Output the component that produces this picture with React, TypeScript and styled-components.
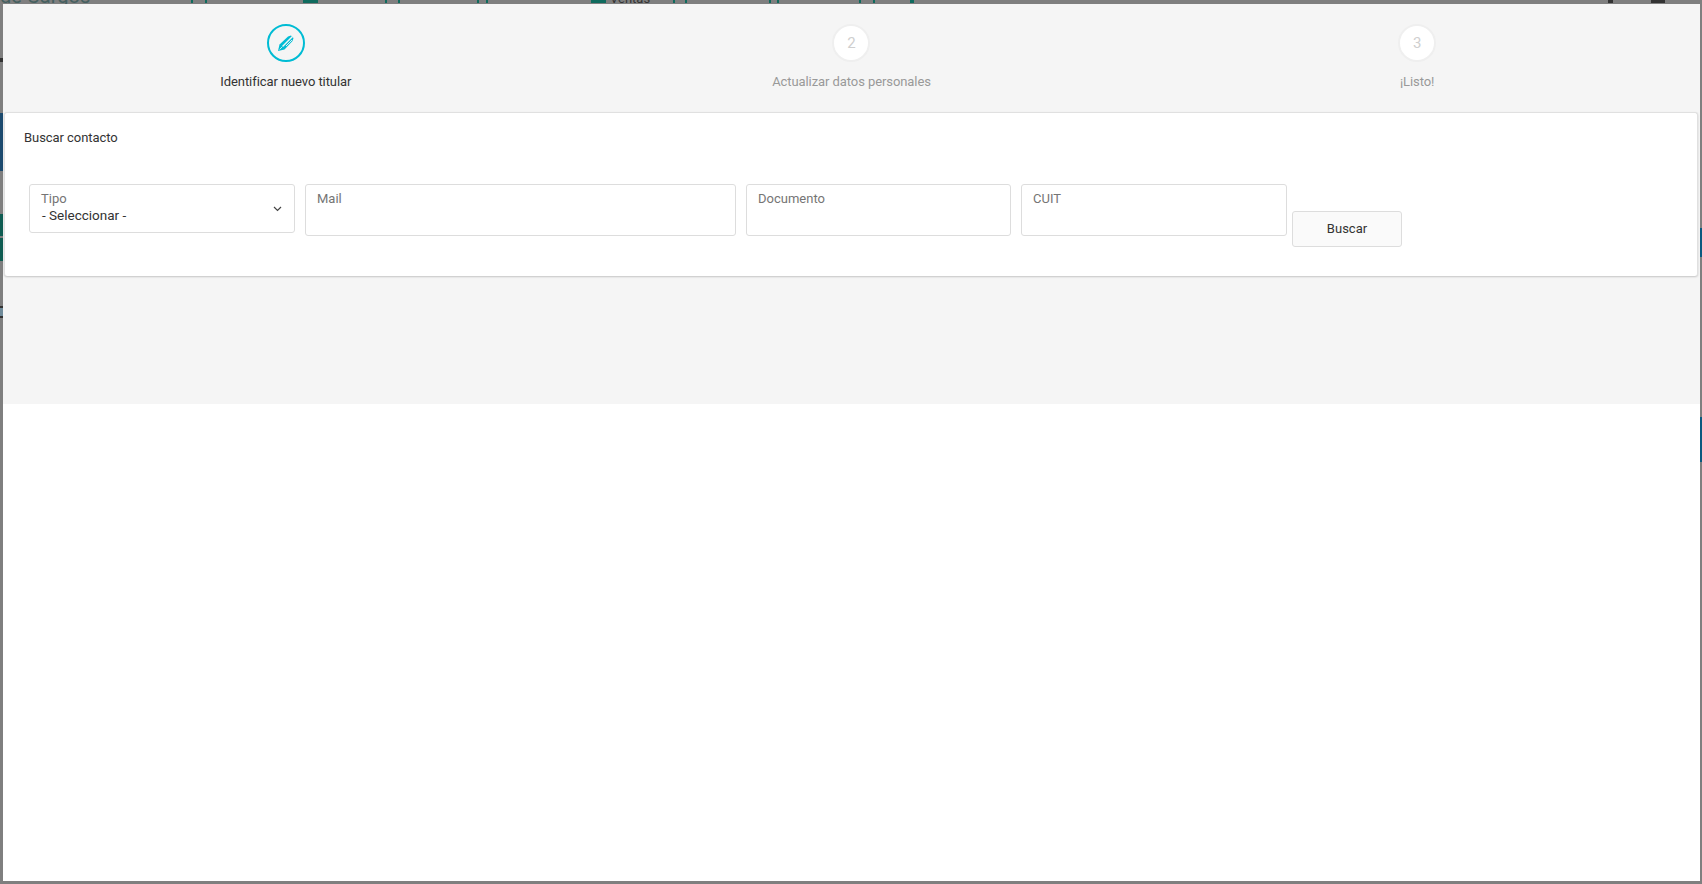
import React, { FC } from 'react';
import styled, { createGlobalStyle } from 'styled-components';

const GlobalStyle = createGlobalStyle`
  html, body {
    margin: 0;
    padding: 0;
    height: 100%;
    overflow: hidden;
    background: #7f7f7f;
    font-family: Roboto, "Liberation Sans", sans-serif;
  }
  * {
    box-sizing: border-box;
  }
`;

const Backdrop = styled.div`
  width: 1702px;
  height: 884px;
  background: #7f7f7f;
  display: flex;
  flex-direction: column;
  overflow: hidden;
`;

const TopSliver = styled.div`
  height: 4px;
  flex: none;
  display: flex;
  overflow: hidden;
`;

const SliverTitle = styled.span`
  width: 191px;
  flex: none;
  margin-top: -16px;
  font-size: 20px;
  line-height: 24px;
  color: #45605f;
  white-space: nowrap;
`;

const SliverText = styled.span`
  width: 36px;
  flex: none;
  margin-top: -9px;
  padding-left: 4px;
  font-size: 13px;
  line-height: 16px;
  color: #333;
`;

const SliverMark = styled.i<{ $left: number; $width: number; $solid?: boolean; $color?: string }>`
  flex: none;
  display: block;
  margin-left: ${p => p.$left}px;
  width: ${p => p.$width}px;
  height: 3px;
  background: ${p => (p.$solid ? p.$color || '#0f6b5e' : 'transparent')};
  border-left: 2px solid ${p => p.$color || '#0f6b5e'};
  border-right: 2px solid ${p => p.$color || '#0f6b5e'};
`;

const Middle = styled.div`
  flex: 1;
  min-height: 0;
  display: flex;
`;

const EdgeStrip = styled.div<{ $width: number }>`
  width: ${p => p.$width}px;
  flex: none;
  display: flex;
  flex-direction: column;
`;

const EdgeBand = styled.i<{ $height: number; $color?: string }>`
  display: block;
  height: ${p => p.$height}px;
  background: ${p => p.$color || 'transparent'};
`;

const Modal = styled.div`
  flex: 1;
  min-width: 0;
  background: #fff;
`;

const Tray = styled.div`
  height: 400px;
  background: #f5f5f5;
  padding: 0 2px 0 1px;
`;

const Steps = styled.div`
  height: 108px;
  margin: 0 -2px 0 -1px;
  display: grid;
  grid-template-columns: repeat(3, 1fr);
`;

const Step = styled.div`
  display: flex;
  flex-direction: column;
  align-items: center;
  padding-top: 20px;
`;

const Bubble = styled.div<{ $active?: boolean }>`
  width: 38px;
  height: 38px;
  border-radius: 50%;
  display: flex;
  align-items: center;
  justify-content: center;
  background: ${p => (p.$active ? '#f5f5f5' : '#fff')};
  border: 2px solid ${p => (p.$active ? '#00bcd4' : '#efefef')};
  color: #cfcfcf;
  font-size: 15px;
  padding-bottom: 1px;
`;

const StepLabel = styled.div<{ $active?: boolean }>`
  margin-top: 10px;
  font-size: 13px;
  line-height: 20px;
  letter-spacing: -0.08px;
  color: ${p => (p.$active ? '#333' : '#999')};
`;

const Card = styled.div`
  height: 164px;
  background: #fff;
  border: 1px solid #e0e0e0;
  border-bottom: 0;
  border-radius: 3px;
  box-shadow: 0 1px 2px rgba(0, 0, 0, 0.2);
  padding: 17px 20px 0 19px;
`;

const CardTitle = styled.div`
  font-size: 13px;
  line-height: 16px;
  letter-spacing: -0.06px;
  color: #333;
`;

const SearchRow = styled.div`
  margin-top: 38px;
  padding-left: 5px;
  display: flex;
  align-items: flex-start;
`;

const Field = styled.div<{ $width: number; $height: number; $gap?: number }>`
  position: relative;
  flex: none;
  width: ${p => p.$width}px;
  height: ${p => p.$height}px;
  margin-right: ${p => (p.$gap === undefined ? 10 : p.$gap)}px;
  padding: 6px 11px 0;
  background: #fff;
  border: 1px solid #ddd;
  border-radius: 3px;
`;

const FieldLabel = styled.div`
  font-size: 13px;
  line-height: 16px;
  color: #757575;
`;

const FieldValue = styled.div`
  padding-left: 1px;
  font-size: 13.5px;
  line-height: 17px;
  color: #333;
`;

const Caret = styled.svg`
  position: absolute;
  right: 12px;
  top: 21px;
  width: 9px;
  height: 6px;
`;

const SearchButton = styled.button`
  flex: none;
  width: 110px;
  height: 36px;
  margin-top: 27px;
  padding: 0 0 2px;
  background: #fafafa;
  border: 1px solid #ddd;
  border-radius: 3px;
  font-family: inherit;
  font-size: 13px;
  color: #333;
`;

const PenIcon: FC = () => (
  <svg width="18" height="18" viewBox="0 0 18 18">
    <path d="M1 17 L2.5 10.5 L11 2.5 L14 1.5 L16.5 4 L15.5 7 L7.5 15.5 Z" fill="#00bcd4" />
    <path d="M5.5 12.5 L15.5 2.5" stroke="#f5f5f5" strokeWidth="1.4" fill="none" />
    <path d="M9 12 L15 6" stroke="#f5f5f5" strokeWidth="0.9" fill="none" />
    <path d="M2.6 15.4 L5 13" stroke="#f5f5f5" strokeWidth="0.8" fill="none" />
  </svg>
);

const App: FC = () => (
  <Backdrop>
    <GlobalStyle />
    <TopSliver>
      <SliverTitle>de Cargos</SliverTitle>
      <SliverMark $left={0} $width={16} />
      <SliverMark $left={96} $width={15} $solid />
      <SliverMark $left={67} $width={15} />
      <SliverMark $left={77} $width={11} />
      <SliverMark $left={103} $width={15} $solid />
      <SliverText>Ventas</SliverText>
      <SliverMark $left={31} $width={14} />
      <SliverMark $left={82} $width={10} />
      <SliverMark $left={80} $width={16} />
      <SliverMark $left={35} $width={4} $solid />
      <SliverMark $left={694} $width={5} $solid $color="#333" />
      <SliverMark $left={38} $width={14} $solid $color="#333" />
    </TopSliver>
    <Middle>
      <EdgeStrip $width={3}>
        <EdgeBand $height={54} />
        <EdgeBand $height={4} $color="#333" />
        <EdgeBand $height={51} />
        <EdgeBand $height={58} $color="#1c4a6e" />
        <EdgeBand $height={43} />
        <EdgeBand $height={22} $color="#0f5c52" />
        <EdgeBand $height={2} />
        <EdgeBand $height={23} $color="#0f5c52" />
        <EdgeBand $height={45} />
        <EdgeBand $height={2} $color="#333" />
        <EdgeBand $height={8} $color="#6f8a99" />
        <EdgeBand $height={2} $color="#333" />
      </EdgeStrip>
      <Modal>
        <Tray>
          <Steps>
            <Step>
              <Bubble $active>
                <PenIcon />
              </Bubble>
              <StepLabel $active>Identificar nuevo titular</StepLabel>
            </Step>
            <Step>
              <Bubble>2</Bubble>
              <StepLabel>Actualizar datos personales</StepLabel>
            </Step>
            <Step>
              <Bubble>3</Bubble>
              <StepLabel>¡Listo!</StepLabel>
            </Step>
          </Steps>
          <Card>
            <CardTitle>Buscar contacto</CardTitle>
            <SearchRow>
              <Field $width={266} $height={49}>
                <FieldLabel>Tipo</FieldLabel>
                <FieldValue>- Seleccionar -</FieldValue>
                <Caret viewBox="0 0 9 6">
                  <path d="M1 1 L4.5 4.5 L8 1" fill="none" stroke="#444" strokeWidth="1.2" />
                </Caret>
              </Field>
              <Field $width={431} $height={52}>
                <FieldLabel>Mail</FieldLabel>
              </Field>
              <Field $width={265} $height={52}>
                <FieldLabel>Documento</FieldLabel>
              </Field>
              <Field $width={266} $height={52} $gap={5}>
                <FieldLabel>CUIT</FieldLabel>
              </Field>
              <SearchButton>Buscar</SearchButton>
            </SearchRow>
          </Card>
        </Tray>
      </Modal>
      <EdgeStrip $width={2}>
        <EdgeBand $height={224} />
        <EdgeBand $height={29} $color="#0a5a80" />
        <EdgeBand $height={160} />
        <EdgeBand $height={45} $color="#0a5a80" />
      </EdgeStrip>
    </Middle>
    <EdgeBand $height={3} />
  </Backdrop>
);

export default App;
